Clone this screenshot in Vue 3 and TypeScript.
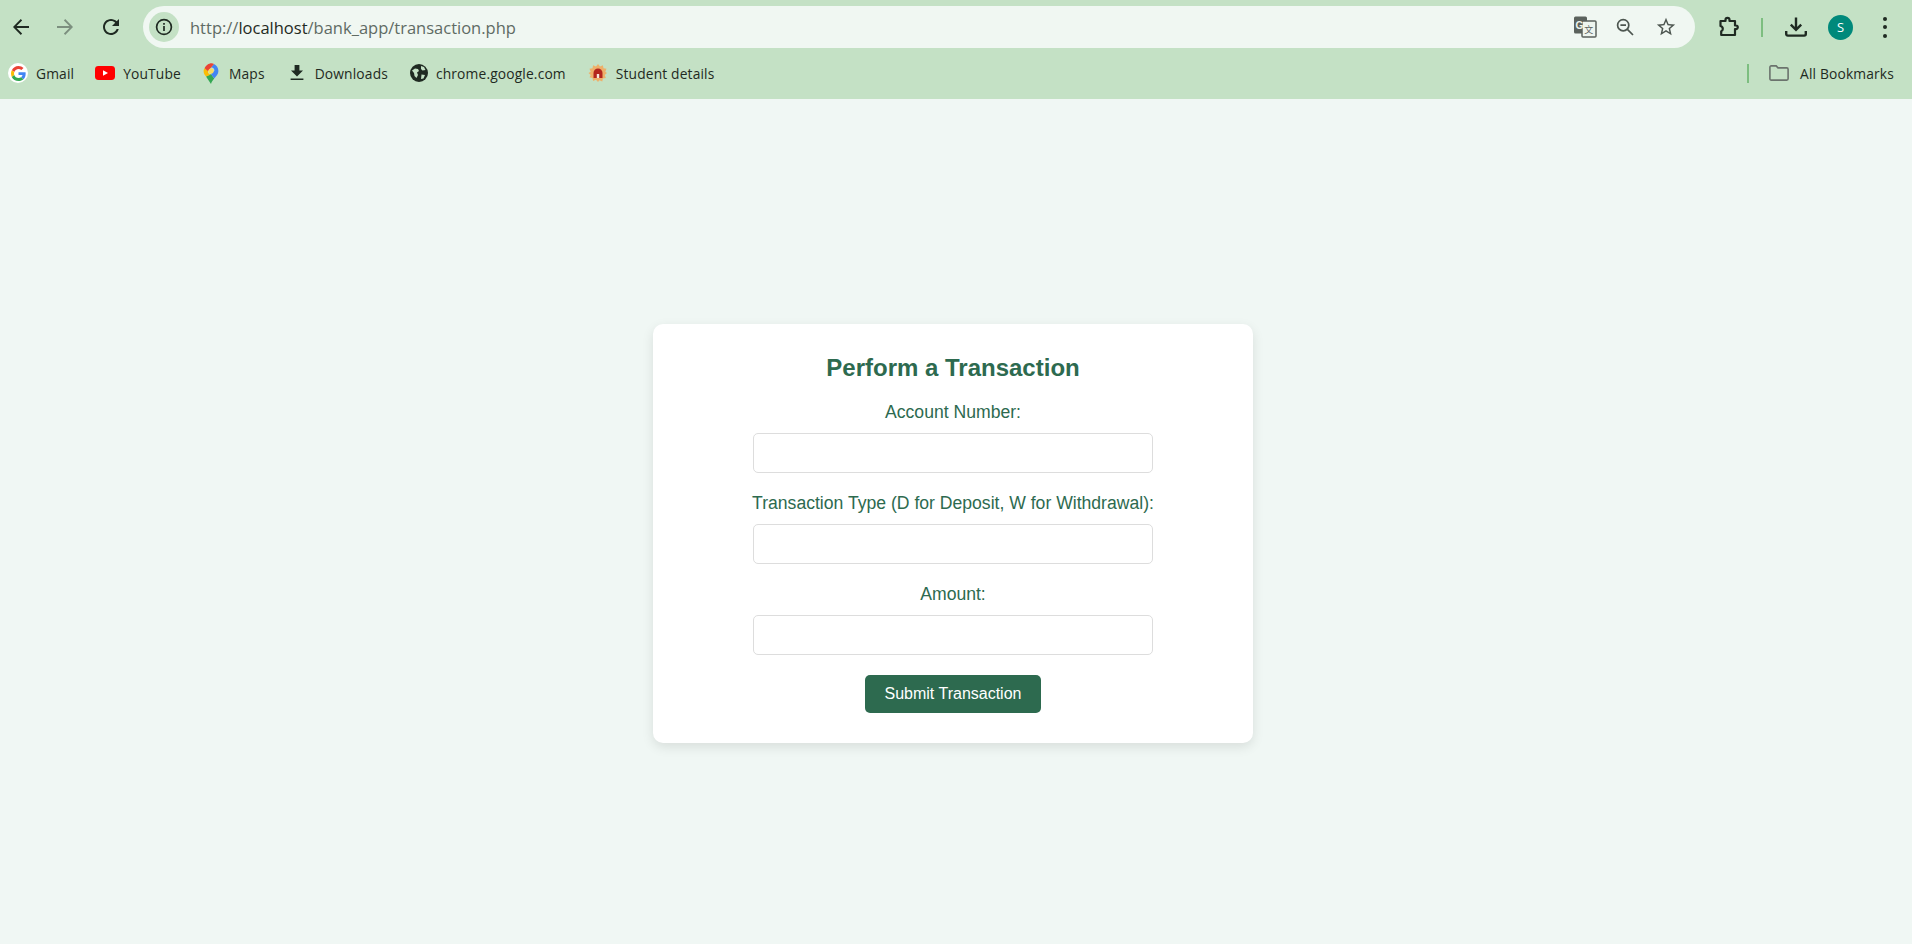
<script setup lang="ts">
const fields = [
  { id: "account", label: "Account Number:" },
  { id: "type", label: "Transaction Type (D for Deposit, W for Withdrawal):" },
  { id: "amount", label: "Amount:" },
];
</script>

<template>
  <div class="chrome">
    <div class="toolbar">
      <svg class="nav nav--back" viewBox="0 0 24 24" fill="#1f2a22"><path d="M20 11H7.6l5.5-5.600L11.800 4 4 12l7.800 8 1.300-1.400L7.600 13H20z" /></svg>
      <svg class="nav nav--forward" viewBox="0 0 24 24" fill="#7c8f7f"><path d="M4 11h12.400l-5.500-5.600L12.200 4 20 12l-7.800 8-1.300-1.400 5.500-5.600H4z" /></svg>
      <svg class="nav nav--reload" viewBox="0 0 24 24" fill="#1f2a22"><path d="M17.650 6.350C16.200 4.900 14.210 4 12 4c-4.420 0-7.990 3.580-7.990 8s3.570 8 7.990 8c3.730 0 6.840-2.550 7.730-6h-2.080c-.82 2.330-3.040 4-5.650 4-3.310 0-6-2.690-6-6s2.690-6 6-6c1.660 0 3.140.69 4.220 1.780L13 11h7V4z" /></svg>
      <div class="omnibox">
        <span class="site-info">
          <svg viewBox="0 0 20 20" width="20" height="20" fill="none" stroke="#1f2a22" stroke-width="1.7">
            <circle cx="10" cy="10" r="7.4" />
            <path d="M10 9v5M10 6v1.800" />
          </svg>
        </span>
        <span class="url">http://<b>localhost</b>/bank_app/transaction.php</span>
        <svg class="omni-icon omni-icon--translate" viewBox="0 0 24 22" width="24" height="22">
          <rect x="1" y="0.5" width="13" height="17" rx="1.5" fill="#5b625d" />
          <rect x="9" y="5" width="14" height="16" rx="1" fill="#eef5ef" stroke="#5b625d" stroke-width="1.5" />
          <text x="2.6" y="12.5" font-size="10" font-weight="700" font-family="Liberation Sans, sans-serif" fill="#eef5ef">G</text>
          <text x="11.2" y="17" font-size="9" font-family="Noto Sans CJK SC, sans-serif" fill="#5b625d">文</text>
        </svg>
        <svg class="omni-icon omni-icon--zoom" viewBox="0 0 20 20" width="20" height="20" fill="none" stroke="#4d5650" stroke-width="1.7">
          <circle cx="8.2" cy="8.2" r="5.6" />
          <path d="M5.4 8.200h5.600M12.400 12.400l5.600 5.600" />
        </svg>
        <svg class="omni-icon omni-icon--star" viewBox="0 0 24 24" width="22" height="22" fill="#4d5650"><path d="M22 9.240l-7.190-.62L12 2 9.190 8.630 2 9.240l5.460 4.730L5.820 21 12 17.270 18.180 21l-1.630-7.030L22 9.240zM12 15.400l-3.760 2.270 1-4.280-3.320-2.880 4.380-.38L12 6.100l1.710 4.040 4.380.38-3.320 2.880 1 4.280L12 15.400z" /></svg>
      </div>
      <div class="actions">
        <svg class="act act--ext" viewBox="0 0 22 22" width="22" height="22" fill="none" stroke="#1f2a22" stroke-width="2.2" stroke-linejoin="round">
          <path d="M2.500 5h5V3.800a2 2 0 0 1 4 0V5h5.500v4.500h1a1.800 1.800 0 0 1 0 3.600h-1V19H3.200v-3.800a2.400 2.400 0 0 0 1.600-2.200 3 3 0 0 0-2.300-3z" />
        </svg>
        <span class="divider" />
        <svg class="act act--dl" viewBox="0 0 22 22" width="22" height="22" fill="none" stroke="#1f2a22" stroke-width="2.4">
          <path d="M11 1.500v12M5.800 8.600 11 13.800l5.200-5.200M1.200 15v3a1.600 1.600 0 0 0 1.600 1.600h16.400a1.600 1.600 0 0 0 1.600-1.600v-3" />
        </svg>
        <span class="avatar">S</span>
        <span class="dots"><i /><i /><i /></span>
      </div>
    </div>

    <div class="bookmarks">
      <a class="mark mark--gmail">
        <span class="g-badge">
          <svg viewBox="0 0 48 48" width="15" height="15">
            <path fill="#EA4335" d="M24 9.500c3.500 0 6.700 1.200 9.200 3.600l6.900-6.900C35.900 2.400 30.500 0 24 0 14.600 0 6.500 5.400 2.600 13.200l8 6.200C12.400 13.700 17.700 9.500 24 9.500z" />
            <path fill="#4285F4" d="M46.900 24.500c0-1.600-.1-3.100-.4-4.500H24v9h12.900c-.6 3-2.200 5.500-4.700 7.200l7.700 6c4.500-4.200 7-10.300 7-17.700z" />
            <path fill="#FBBC05" d="M10.500 28.600c-.5-1.400-.8-3-.8-4.600s.3-3.200.8-4.600l-8-6.200C.9 16.500 0 20.100 0 24s.9 7.500 2.600 10.800z" />
            <path fill="#34A853" d="M24 48c6.500 0 11.900-2.100 15.900-5.800l-7.700-6c-2.200 1.400-4.900 2.300-8.200 2.300-6.300 0-11.600-4.200-13.500-9.900l-8 6.200C6.500 42.600 14.600 48 24 48z" />
          </svg>
        </span>
        <span>Gmail</span>
      </a>
      <a class="mark mark--youtube">
        <svg viewBox="0 0 20 14" width="20" height="14">
          <rect width="20" height="14" rx="3.4" fill="#f00" />
          <path d="M8 4.200 13 7l-5 2.800z" fill="#fff" />
        </svg>
        <span>YouTube</span>
      </a>
      <a class="mark mark--maps">
        <svg viewBox="0 0 16 21" width="16" height="21">
          <path fill="#34a853" d="M3 13.500 8 21c.6-2.200 2-3.900 3.200-5.400L8 11z" />
          <path fill="#fbbc04" d="M1.600 5.200 5 8.200c-.3 1.800 1 3.200 3 3.200L3 13.500C1.800 12 .6 10.600.6 8c0-1 .3-2 1-2.800z" />
          <path fill="#4285f4" d="M11 1 8 4.600c2-.5 3.600 1 3.400 3.100L8 11l3.200 4.600c2-2.400 4.200-4.400 4.200-7.600 0-3-1.800-5.800-4.400-7z" />
          <path fill="#ea4335" d="M1.600 5.200C3 1.900 7.600-1 11 1L5 8.200z" />
          <circle cx="8" cy="8" r="2.6" fill="#fbdc5c" />
        </svg>
        <span>Maps</span>
      </a>
      <a class="mark mark--downloads">
        <svg viewBox="0 0 14 16" width="14" height="16" fill="#1f2a22"><path d="M4.600 0h4.800v5.600H13L7 11.400 1 5.600h3.600zM.6 13.400h12.800V15H.6z" /></svg>
        <span>Downloads</span>
      </a>
      <a class="mark mark--store">
        <svg viewBox="0 0 18 18" width="18" height="18">
          <circle cx="9" cy="9" r="9" fill="#1f2a22" />
          <path fill="#c4e1c5" d="M2 6.500 5 4.500l3 .5 1 2-2 1.500 1 2.500-1.500 3-2-2-.5-3zM11 2l3 1 1.500 3-3 .5-1.500-1.500zM11.500 10.500l3.500.5-1.500 3.500-2.500.5z" />
        </svg>
        <span>chrome.google.com</span>
      </a>
      <a class="mark mark--student">
        <svg viewBox="0 0 20 20" width="20" height="20">
          <path fill="#eeb06a" d="M10 1l2 2.400 2.900-1.200.6 3 3 .6-1.200 2.900L19 10l-2.300 2 1.200 2.900-3 .6-.6 3-2.900-1.200L10 19l-2-2.300-2.900 1.200-.6-3-3-.6L2.700 12 .5 10l2.200-1.300-1.200-2.900 3-.6.6-3L8 3.400z" />
          <path fill="#b3261e" d="M5.500 15V10a4.500 4.500 0 0 1 9 0v5z" />
          <rect x="8.8" y="11" width="2.4" height="4" fill="#f6e6dc" />
        </svg>
        <span>Student details</span>
      </a>
      <span class="divider divider--bar" />
      <a class="mark mark--all">
        <svg viewBox="0 0 20 16" width="20" height="16" fill="none" stroke="#6b736d" stroke-width="1.6">
          <path d="M.9 2.200A1.300 1.300 0 0 1 2.200.9h5l1.800 2h8.800a1.300 1.300 0 0 1 1.300 1.300v9.600a1.300 1.300 0 0 1-1.300 1.300H2.200a1.300 1.300 0 0 1-1.300-1.300z" />
        </svg>
        <span>All Bookmarks</span>
      </a>
    </div>
  </div>

  <main class="page">
    <form class="card" @submit.prevent>
      <h2 class="title">Perform a Transaction</h2>
      <template v-for="field in fields" :key="field.id">
        <label class="label" :for="field.id">{{ field.label }}</label>
        <input :id="field.id" class="input" type="text" />
      </template>
      <button class="submit" type="submit">Submit Transaction</button>
    </form>
  </main>
</template>

<style scoped>
.chrome {
  height: 99px;
  background: #c4e1c5;
  font-family: "Open Sans", "Noto Sans", sans-serif;
  color: #1f2a22;
}
.toolbar {
  display: flex;
  align-items: center;
  height: 54px;
  padding-left: 9px;
}
.nav {
  flex: none;
  width: 24px;
  height: 24px;
}
.nav--forward {
  margin-left: 20px;
}
.nav--reload {
  margin-left: 22px;
}
.omnibox {
  flex: 1;
  display: flex;
  align-items: center;
  height: 42px;
  margin-left: 20px;
  padding-left: 6px;
  background: #f0f7f2;
  border-radius: 21px;
}
.site-info {
  display: flex;
  align-items: center;
  justify-content: center;
  width: 30px;
  height: 30px;
  background: #c4e1c5;
  border-radius: 50%;
}
.url {
  flex: 1;
  margin-left: 11px;
  font-size: 16.5px;
  color: #5f6b64;
}
.url b {
  font-weight: 400;
  color: #1f2a22;
}
.omni-icon--zoom {
  margin-left: 18px;
}
.omni-icon--star {
  margin-left: 20px;
  margin-right: 18px;
}
.actions {
  flex: none;
  display: flex;
  align-items: center;
  box-sizing: border-box;
  width: 217px;
  padding-left: 23px;
}
.divider {
  flex: none;
  width: 2px;
  height: 19px;
  margin-left: 21px;
  background: #7dbe80;
}
.act--dl {
  margin-left: 22px;
}
.avatar {
  display: flex;
  align-items: center;
  justify-content: center;
  width: 25px;
  height: 25px;
  margin-left: 21px;
  background: #00897b;
  border-radius: 50%;
  color: #fff;
  font-size: 13px;
}
.dots {
  display: flex;
  flex-direction: column;
  gap: 4.5px;
  margin-left: 30px;
}
.dots i {
  width: 4px;
  height: 4px;
  background: #1f2a22;
  border-radius: 50%;
}
.bookmarks {
  display: flex;
  align-items: center;
  height: 38px;
  padding-left: 8px;
  font-size: 13.8px;
  letter-spacing: 0.15px;
}
.mark {
  display: flex;
  align-items: center;
  gap: 8px;
  white-space: nowrap;
}
.g-badge {
  display: flex;
  align-items: center;
  justify-content: center;
  width: 20px;
  height: 20px;
  background: #fff;
  border-radius: 50%;
}
.mark--youtube {
  margin-left: 21px;
}
.mark--maps {
  margin-left: 22px;
  gap: 10px;
}
.mark--downloads {
  margin-left: 25px;
  gap: 11px;
}
.mark--store {
  margin-left: 22px;
}
.mark--student {
  margin-left: 22px;
}
.divider--bar {
  margin-left: auto;
}
.mark--all {
  margin-left: 20px;
  margin-right: 18px;
  gap: 11px;
}
.page {
  display: flex;
  justify-content: center;
  box-sizing: border-box;
  height: 845px;
  padding: 225px 6px 0 0;
  background: #f0f7f4;
}
.card {
  display: flex;
  flex-direction: column;
  align-items: center;
  box-sizing: border-box;
  width: 600px;
  height: 419px;
  padding: 30px;
  background: #fff;
  border-radius: 10px;
  box-shadow: 0 4px 12px rgba(0, 0, 0, 0.1);
  font-family: "Liberation Sans", Arial, sans-serif;
  color: #2d6a4f;
}
.title {
  margin: 0 0 21px;
  font-size: 24px;
  line-height: 27px;
  font-weight: 700;
}
.label {
  margin-bottom: 11px;
  font-size: 17.6px;
  line-height: 20px;
}
.input {
  box-sizing: border-box;
  width: 400px;
  height: 40px;
  margin: 0 0 20px;
  padding: 10px;
  background: #fff;
  border: 1px solid #ddd;
  border-radius: 5px;
}
.submit {
  box-sizing: border-box;
  width: 176px;
  height: 38px;
  background: #2d6a4f;
  border: 0;
  border-radius: 5px;
  color: #fff;
  font-family: inherit;
  font-size: 16px;
}
</style>

<style>
html,
body {
  margin: 0;
  background: #f0f7f4;
}
</style>
